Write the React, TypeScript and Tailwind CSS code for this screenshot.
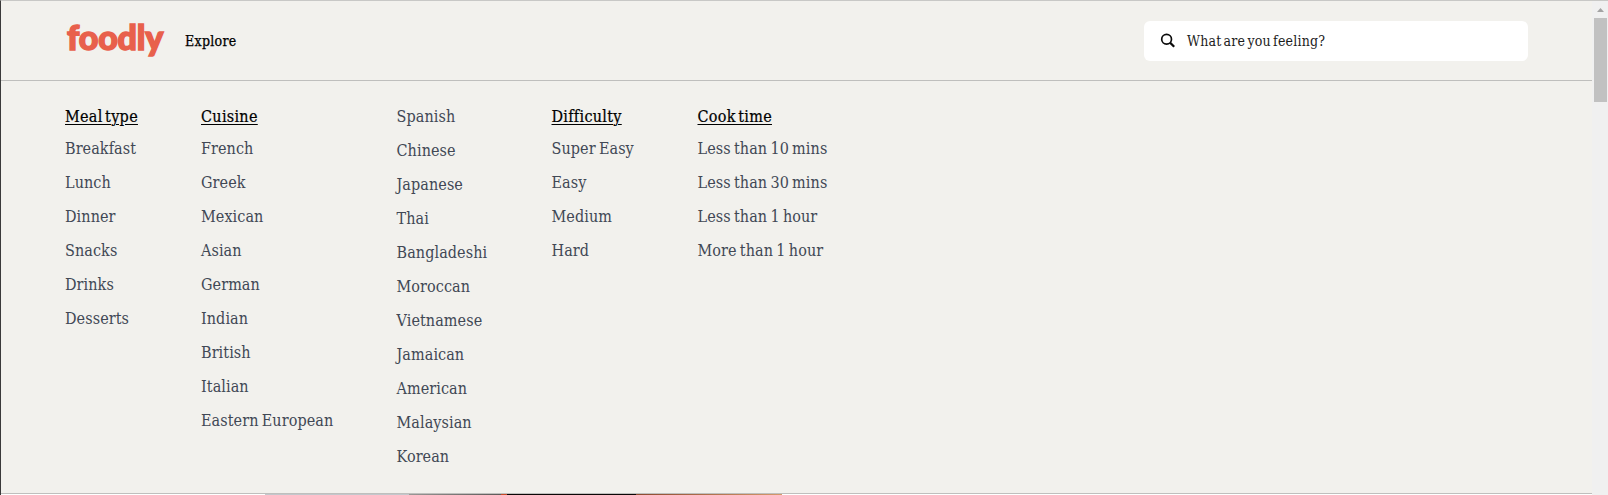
import React from "react";

type Column = { title?: string; width: string; items: string[] };

const columns: Column[] = [
  { title: "Meal type", width: "w-[136px]", items: ["Breakfast", "Lunch", "Dinner", "Snacks", "Drinks", "Desserts"] },
  {
    title: "Cuisine",
    width: "w-[195.5px]",
    items: ["French", "Greek", "Mexican", "Asian", "German", "Indian", "British", "Italian", "Eastern European"],
  },
  {
    width: "w-[155px]",
    items: [
      "Spanish", "Chinese", "Japanese", "Thai", "Bangladeshi", "Moroccan",
      "Vietnamese", "Jamaican", "American", "Malaysian", "Korean",
    ],
  },
  { title: "Difficulty", width: "w-[146px]", items: ["Super Easy", "Easy", "Medium", "Hard"] },
  {
    title: "Cook time",
    width: "w-[200px]",
    items: ["Less than 10 mins", "Less than 30 mins", "Less than 1 hour", "More than 1 hour"],
  },
];

function Logo() {
  return (
    <a className="mb-[8px] block w-[98px] whitespace-nowrap font-['Lato'] text-[34px] leading-[40px] font-black tracking-[-0.2px] text-[#e8604c] [-webkit-text-stroke:1.5px_#e8604c]">
      foodly
    </a>
  );
}

function Header() {
  return (
    <header className="flex h-[80px] items-center border-b border-[#bfbfbd] pr-16 pl-[66px]">
      <Logo />
      <a className="ml-5 text-[14px] leading-5 tracking-[0.3px] text-black [-webkit-text-stroke:0.25px_black]">Explore</a>
      <div className="ml-auto flex h-10 w-96 items-center rounded-md bg-white pl-4">
        <svg className="size-4" viewBox="0 0 16 16" fill="none" stroke="#0b0b0b">
          <circle cx="6.6" cy="6.2" r="4.9" strokeWidth="1.7" />
          <path d="M10 9.6l4.2 4.2" strokeWidth="2.2" />
        </svg>
        <span className="ml-[11px] text-[14px] leading-5 tracking-[0.2px] [word-spacing:-2px] text-[#1c1c1c]">
          What are you feeling?
        </span>
      </div>
    </header>
  );
}

function Menu() {
  return (
    <nav className="flex h-[413px] border-b border-[#bfbfbd] pt-6 pl-16 text-[16px] tracking-[0.08px] [word-spacing:-1.4px] text-[#414855]">
      {columns.map((column, i) => (
        <div key={i} className={`${column.width} shrink-0 whitespace-nowrap`}>
          {column.title && (
            <h2 className="h-8 leading-6 tracking-[0.3px] [word-spacing:-2.4px] text-black underline decoration-1 underline-offset-2 [-webkit-text-stroke:0.2px_black]">
              {column.title}
            </h2>
          )}
          <ul>
            {column.items.map((item) => (
              <li key={item} className="h-[34px] leading-6">
                {item}
              </li>
            ))}
          </ul>
        </div>
      ))}
    </nav>
  );
}

function Scrollbar() {
  return (
    <div className="flex w-4 shrink-0 flex-col items-center bg-[#f0f0f0] pt-[7px]">
      <svg className="h-1 w-[7px]" viewBox="0 0 7 4" fill="#a3a3a3">
        <path d="M3.5 0L7 4H0z" />
      </svg>
      <div className="mt-[6px] ml-px h-[84px] w-[13px] bg-[#c1c1c1]" />
    </div>
  );
}

export default function App() {
  return (
    <div className="flex h-[495px] w-[1608px] overflow-hidden border-t border-l border-t-[#c8c8c6] border-l-[#3a3a3a] bg-[#f2f1ed] font-['DejaVu_Serif_Condensed','DejaVu_Serif',serif] [font-stretch:condensed]">
      <div className="w-[1591px] shrink-0">
        <Header />
        <Menu />
        <div className="flex h-px bg-white">
          <div className="ml-[264px] h-px w-[144px] bg-[#c4c7cc]" />
          <div className="h-px w-[92px] bg-linear-to-r from-[#9a9896] to-[#5d5a58]" />
          <div className="h-px w-[6px] bg-[#c84a28]" />
          <div className="h-px w-[129px] bg-[#0c0706]" />
          <div className="h-px w-[146px] bg-linear-to-r from-[#8b4a30] to-[#d59a6c]" />
        </div>
      </div>
      <Scrollbar />
    </div>
  );
}
